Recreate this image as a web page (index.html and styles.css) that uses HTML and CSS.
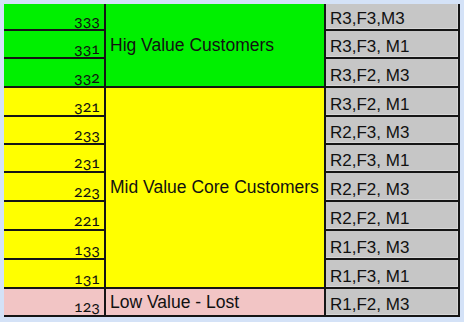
FILE: index.html
```html
<!DOCTYPE html>
<html>
<head>
<meta charset="utf-8">
<link rel="stylesheet" href="styles.css">
</head>
<body>
<div class="sheet">
  <div class="num green r1">333</div>
  <div class="num green r2">331</div>
  <div class="num green r3">332</div>
  <div class="num yellow r4">321</div>
  <div class="num yellow r5">233</div>
  <div class="num yellow r6">231</div>
  <div class="num yellow r7">223</div>
  <div class="num yellow r8">221</div>
  <div class="num yellow r9">133</div>
  <div class="num yellow r10">131</div>
  <div class="num pink r11">123</div>

  <div class="seg green seg-high">Hig Value Customers</div>
  <div class="seg yellow seg-mid">Mid Value Core Customers</div>
  <div class="seg pink seg-low">Low Value - Lost</div>

  <div class="code r1">R3,F3,M3</div>
  <div class="code r2">R3,F3, M1</div>
  <div class="code r3">R3,F2, M3</div>
  <div class="code r4">R3,F2, M1</div>
  <div class="code r5">R2,F3, M3</div>
  <div class="code r6">R2,F3, M1</div>
  <div class="code r7">R2,F2, M3</div>
  <div class="code r8">R2,F2, M1</div>
  <div class="code r9">R1,F3, M3</div>
  <div class="code r10">R1,F3, M1</div>
  <div class="code r11">R1,F2, M3</div>
</div>
</body>
</html>
```

FILE: styles.css
```css
html, body {
  margin: 0;
  padding: 0;
}
body {
  background: #d4e2f7;
  width: 464px;
  height: 322px;
  padding: 4px 0 0 4px;
  box-sizing: border-box;
}
.sheet {
  display: grid;
  grid-template-columns: 102px 220px 134px;
  grid-template-rows: 27px 28px 29px 29px 28px 28px 29px 29px 29px 29px 28px;
  width: 456px;
}
.sheet > div {
  box-sizing: border-box;
  border-right: 2px solid #151515;
  border-bottom: 2px solid #151515;
  color: #111;
}
.green { background: #00f000; }
.yellow { background: #ffff00; }
.pink { background: #f2c5c5; }

.num {
  grid-column: 1;
  display: flex;
  align-items: flex-end;
  justify-content: flex-end;
  padding-right: 4px;
  font-family: "Lato", "Open Sans", sans-serif;
  font-variant-numeric: oldstyle-nums;
  font-size: 16px;
  line-height: 16px;
  padding-bottom: 1px;
}
.seg {
  grid-column: 2;
  display: flex;
  align-items: center;
  padding-left: 4px;
  font-family: "Liberation Sans", Arial, sans-serif;
  font-size: 17.5px;
}
.seg-high { grid-row: 1 / 4; }
.seg-mid { grid-row: 4 / 11; }
.seg-low { grid-row: 11 / 12; color: #222; }

.code {
  grid-column: 3;
  background: #c6c6c6;
  display: flex;
  align-items: flex-end;
  padding-left: 4px;
  font-family: "Liberation Sans", Arial, sans-serif;
  font-size: 17px;
  line-height: 20px;
  box-shadow: inset -1px -1px 0 #d6d6d6;
}
.r1 { grid-row: 1; }
.r2 { grid-row: 2; }
.r3 { grid-row: 3; }
.r4 { grid-row: 4; }
.r5 { grid-row: 5; }
.r6 { grid-row: 6; }
.r7 { grid-row: 7; }
.r8 { grid-row: 8; }
.r9 { grid-row: 9; }
.r10 { grid-row: 10; }
.r11 { grid-row: 11; }
```
